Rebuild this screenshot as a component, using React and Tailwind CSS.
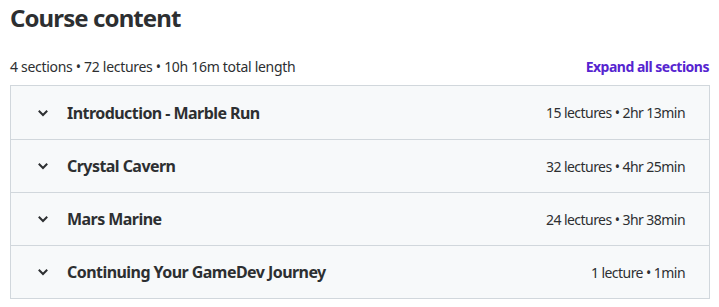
import React from "react";

const sections = [
  { title: "Introduction - Marble Run", meta: "15 lectures • 2hr 13min" },
  { title: "Crystal Cavern", meta: "32 lectures • 4hr 25min" },
  { title: "Mars Marine", meta: "24 lectures • 3hr 38min" },
  { title: "Continuing Your GameDev Journey", meta: "1 lecture • 1min" },
];

function Chevron() {
  return (
    <svg width="16" height="16" viewBox="0 0 16 16" className="shrink-0">
      <path d="M4.5 6.5 L8 10 L11.5 6.5" fill="none" stroke="#2d2f31" strokeWidth="2" strokeLinecap="square" />
    </svg>
  );
}

export default function App() {
  return (
    <div className="w-[719px] h-[307px] bg-white px-[10px] text-[#2d2f31]" style={{ fontFamily: '"Noto Sans", "Open Sans", sans-serif' }}>
      <h2 className="text-[24px] font-bold leading-[36px] tracking-[-0.9px]">Course content</h2>
      <div className="flex items-end justify-between mt-[21px] mb-[8px]">
        <span className="text-[14px] leading-[20px] tracking-[-0.3px]">4 sections • 72 lectures • 10h 16m total length</span>
        <button className="text-[14px] font-bold leading-[20px] tracking-[-0.5px] text-[#5624d0]">Expand all sections</button>
      </div>
      <div className="border border-[#d1d7dc] w-[700px]">
        {sections.map((s, i) => (
          <div
            key={i}
            className={"flex items-center justify-between h-[53px] bg-[#f7f9fa] pl-[24px] pr-[24px] " + (i > 0 ? "border-t border-[#d1d7dc]" : "")}
          >
            <div className="flex items-center gap-[16px]">
              <Chevron />
              <span className="text-[16px] font-bold tracking-[-0.55px]">{s.title}</span>
            </div>
            <span className="text-[14px] tracking-[-0.55px]">{s.meta}</span>
          </div>
        ))}
      </div>
    </div>
  );
}
